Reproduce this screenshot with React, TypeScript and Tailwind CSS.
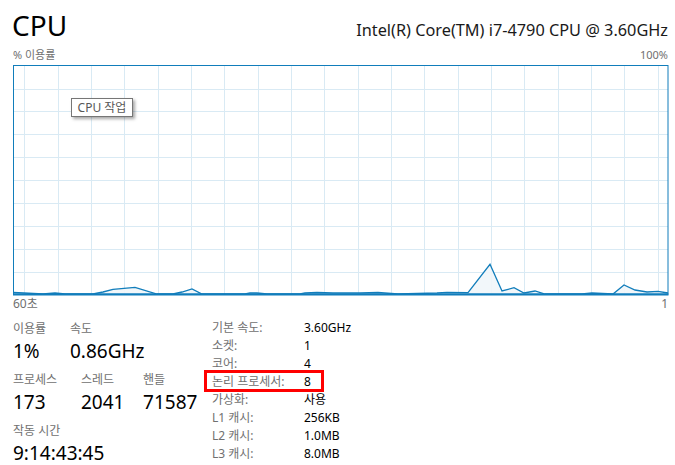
import React from "react";

const pts: [number, number][] = [
  [13, 292.3], [24, 293], [43, 294], [55, 293], [65, 294], [93, 294], [103, 292],
  [113, 289.3], [135, 287.3], [157, 294], [173, 294], [182, 292], [192, 289], [202, 294],
  [245, 294], [250, 293], [257, 293], [267, 294], [300, 294], [305, 293], [317, 292.5],
  [333, 293], [345, 293], [360, 293], [378, 292.5], [398, 294], [437, 293], [447, 292.3],
  [468, 292.7], [490, 264.3], [502, 291], [514, 287.7], [524, 293], [535, 291], [545, 294],
  [582, 294], [592, 293], [613, 294], [624, 285], [635, 290], [647, 292], [658, 291.3],
  [668, 293],
];

const vLines = Array.from({ length: 20 }, (_, k) => Math.round(24.3 + 33.33 * k) + 0.5);
const hLines = Array.from({ length: 9 }, (_, k) => Math.round(65.7 + 22.87 * (k + 1)) + 0.5);

function Chart() {
  const line = pts.map(([x, y]) => `${x},${y}`).join(" ");
  const area = `13,294.5 ${line} 668,294.5`;
  return (
    <svg className="ml-[12px] block" width={657} height={232} viewBox="12 65 657 232">
      {vLines.map((x) => (
        <line key={x} x1={x} y1={65} x2={x} y2={295} stroke="#d9eaf4" strokeWidth={1} />
      ))}
      {hLines.map((y) => (
        <line key={y} x1={13} y1={y} x2={668} y2={y} stroke="#d9eaf4" strokeWidth={1} />
      ))}
      <polygon points={area} fill="#f1f6fa" fillOpacity={0.9} />
      <polyline points={line} fill="none" stroke="#117dbb" strokeWidth={1.3} />
      <rect x={13.5} y={65.5} width={654.5} height={228.5} fill="none" stroke="#117dbb" strokeWidth={1} />
      <line x1={13} y1={294.5} x2={668.5} y2={294.5} stroke="#117dbb" strokeWidth={2} />
    </svg>
  );
}

function Stat({ label, value, w }: { label: string; value: string; w: string }) {
  return (
    <div className={w}>
      <div className="h-[20px] text-[12px] leading-[20px] text-[#707070]">{label}</div>
      <div className="h-[24px] text-[19px] leading-[24px] text-black">{value}</div>
    </div>
  );
}

const specs: [string, string][] = [
  ["기본 속도:", "3.60GHz"],
  ["소켓:", "1"],
  ["코어:", "4"],
  ["논리 프로세서:", "8"],
  ["가상화:", "사용"],
  ["L1 캐시:", "256KB"],
  ["L2 캐시:", "1.0MB"],
  ["L3 캐시:", "8.0MB"],
];

export default function App() {
  return (
    <div
      className="relative h-[465px] w-[675px] overflow-hidden bg-white"
      style={{ fontFamily: '"Noto Sans", "Noto Sans CJK KR", sans-serif' }}
    >
      <div className="flex h-[45px] items-baseline justify-between pl-[12px] pr-[7px] pt-[9px]">
        <span className="text-[28px] leading-[32px] text-black">CPU</span>
        <span className="text-[16.3px] leading-[20px] text-[#1a1a1a]">Intel(R) Core(TM) i7-4790 CPU @ 3.60GHz</span>
      </div>
      <div className="flex h-[20px] items-center justify-between pl-[13px] pr-[7px] text-[11px] text-[#707070]">
        <span>% 이용률</span>
        <span>100%</span>
      </div>
      <Chart />
      <div className="flex h-[14px] items-center justify-between pl-[13px] pr-[7px] text-[12px] leading-[14px] text-[#707070]">
        <span>60초</span>
        <span>1</span>
      </div>

      <div className="mt-[8px] flex pl-[13px]">
        <div className="flex w-[199px] flex-col gap-[7px]">
          <div className="flex">
            <Stat w="w-[57px]" label="이용률" value="1%" />
            <Stat w="w-[90px]" label="속도" value="0.86GHz" />
          </div>
          <div className="flex">
            <Stat w="w-[69px]" label="프로세스" value="173" />
            <Stat w="w-[63px]" label="스레드" value="2041" />
            <Stat w="w-[70px]" label="핸들" value="71587" />
          </div>
          <div className="flex">
            <Stat w="w-[150px]" label="작동 시간" value="9:14:43:45" />
          </div>
        </div>
        <div className="flex flex-col text-[12px]">
          {specs.map(([k, v], i) => (
            <div key={k} className="relative flex h-[18px] items-center leading-[18px]">
              <span className="w-[92px] text-[#707070]">{k}</span>
              <span className="text-black">{v}</span>
              {i === 3 && (
                <span className="absolute -left-[8px] -top-[3px] h-[22px] w-[120px] border-[3px] border-[#ff0000]" />
              )}
            </div>
          ))}
        </div>
      </div>

      <div className="absolute left-[71px] top-[98px] flex h-[19px] w-[62px] items-center justify-center border border-[#767676] bg-white text-[12px] text-[#575757] shadow-[2px_2px_3px_rgba(0,0,0,0.35)]">
        CPU 작업
      </div>
    </div>
  );
}
